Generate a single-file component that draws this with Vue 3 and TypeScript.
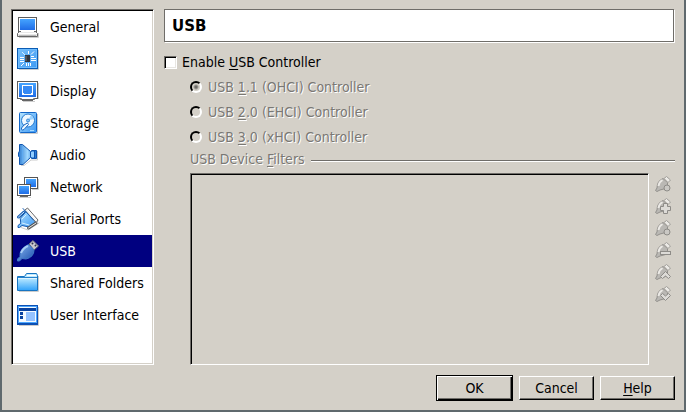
<script setup lang="ts">
import { ref } from 'vue'

type Category = { id: string; label: string }
type Controller = { id: string; digit: string; rest: string }
type Action = { id: string; label: string }

const categories: Category[] = [
  { id: 'general', label: 'General' },
  { id: 'system', label: 'System' },
  { id: 'display', label: 'Display' },
  { id: 'storage', label: 'Storage' },
  { id: 'audio', label: 'Audio' },
  { id: 'network', label: 'Network' },
  { id: 'serial', label: 'Serial Ports' },
  { id: 'usb', label: 'USB' },
  { id: 'folders', label: 'Shared Folders' },
  { id: 'ui', label: 'User Interface' },
]

const controllers: Controller[] = [
  { id: 'ohci', digit: '1', rest: '.1 (OHCI) Controller' },
  { id: 'ehci', digit: '2', rest: '.0 (EHCI) Controller' },
  { id: 'xhci', digit: '3', rest: '.0 (xHCI) Controller' },
]

const actions: Action[] = [
  { id: 'new', label: 'Add empty filter' },
  { id: 'add', label: 'Add filter from device' },
  { id: 'edit', label: 'Edit filter' },
  { id: 'remove', label: 'Remove filter' },
  { id: 'up', label: 'Move filter up' },
  { id: 'down', label: 'Move filter down' },
]

const current = ref('usb')
const enabled = ref(false)
const controller = ref('ohci')
</script>

<template>
  <form class="window" @submit.prevent>
    <svg class="defs" aria-hidden="true">
      <defs>
        <linearGradient id="blue" x1="0" y1="0" x2="0" y2="1">
          <stop offset="0" stop-color="#45a4ff" />
          <stop offset="1" stop-color="#1f6ce6" />
        </linearGradient>
        <linearGradient id="sky" x1="0" y1="0" x2="1" y2="1">
          <stop offset="0" stop-color="#b4e4ff" />
          <stop offset="1" stop-color="#3a96f4" />
        </linearGradient>
        <linearGradient id="folder" x1="0" y1="0" x2="0" y2="1">
          <stop offset="0" stop-color="#bdeaff" />
          <stop offset="1" stop-color="#36a5fa" />
        </linearGradient>
        <linearGradient id="cone" x1="0" y1="0" x2="1" y2="0">
          <stop offset="0" stop-color="#2b7ad0" />
          <stop offset="0.5" stop-color="#a0d8ff" />
          <stop offset="1" stop-color="#1c6fd4" />
        </linearGradient>
        <linearGradient id="plug" x1="0" y1="0" x2="1" y2="1">
          <stop offset="0" stop-color="#86b6ee" />
          <stop offset="1" stop-color="#1c4fae" />
        </linearGradient>
      </defs>
    </svg>

    <nav class="categories" aria-label="Settings categories">
      <button
        v-for="c in categories"
        :key="c.id"
        type="button"
        class="category"
        :class="{ selected: current === c.id }"
        @click="current = c.id"
      >
        <svg class="icon" viewBox="0 0 24 24" aria-hidden="true">
          <g v-if="c.id === 'general'">
            <path d="M3 22.500H22.500V18" fill="none" stroke="#ccc" />
            <rect x="2.500" y="2.500" width="18" height="14" fill="#fff" stroke="#5c5c5c" />
            <rect x="4" y="4" width="15" height="11" fill="url(#blue)" />
            <path d="M3.500 16.500H19.500L21.500 18.500V21.500H1.500V18.500Z" fill="#e8e8e8" stroke="#666" />
            <path d="M5 16.500H18M2 18.500H21" stroke="#fff" />
            <path d="M3 20.500H20" stroke="#bbb" />
          </g>
          <g v-else-if="c.id === 'system'">
            <path d="M3 22.500H22.500V3" fill="none" stroke="#ccc" />
            <rect x="1.500" y="1.500" width="20" height="20" fill="url(#sky)" stroke="#0b5cb4" />
            <rect x="2.500" y="2.500" width="18" height="18" fill="#3f9cf2" fill-opacity="0.500" stroke="#6dbcff" />
            <rect x="9" y="8" width="5" height="7" fill="#303640" />
            <path d="M10 9V14" stroke="#777" />
            <path d="M4 10.500H8M4 12.500H8M4 14.500H8M15 9.500H18M15 11.500H20M15 13.500H20M10.500 16V19M12.500 16V19M14.500 16V19M12.500 4V7M15 7.500L18 4.500M5 19L8 16" fill="none" stroke="#fff" />
            <path d="M6 5L9 8" stroke="#d8f0ff" />
          </g>
          <g v-else-if="c.id === 'display'">
            <path d="M22.500 4V20M7 22.500H19" stroke="#ccc" />
            <rect x="1.500" y="2.500" width="20" height="17" fill="#fff" stroke="#5c5c5c" />
            <rect x="3" y="4" width="17" height="14" fill="url(#blue)" />
            <rect x="6.500" y="6.500" width="10" height="9" fill="#3589f4" stroke="#fff" />
            <path d="M7 14.500H8M15 14.500H16" stroke="#fff" />
            <path d="M4.500 19.500V20.500H18.500V19.500M6 21.500H17" fill="#ddd" stroke="#666" />
            <path d="M6 19.500H17" stroke="#fff" />
          </g>
          <g v-else-if="c.id === 'storage'">
            <path d="M4 22.500H21.500V3" fill="none" stroke="#ccc" />
            <rect x="3.500" y="1.500" width="17" height="20" rx="1" fill="url(#sky)" stroke="#1266c8" />
            <circle cx="12" cy="9.500" r="6.500" fill="#eef8ff" stroke="#267bd0" />
            <path d="M12 9.500L15 4A6 6 0 0 1 18 8Z" fill="#9bd2ff" />
            <circle cx="12" cy="9.500" r="1.500" fill="#8cc5f4" stroke="#3a8bd8" />
            <path d="M12.500 13.500L8 18.500Q5 20 5.500 17L8 14L11.500 12Z" fill="#eef8ff" stroke="#1767c2" />
            <path d="M14 19.500H18" stroke="#a8dcff" />
          </g>
          <g v-else-if="c.id === 'audio'">
            <path d="M5 22.500H8L15 17H21.500V8" fill="none" stroke="#ccc" />
            <path d="M3.500 1.500H6.500L14.500 8.500H15.500V7.500H20.500V15.500H15.500V14.500H14.500L7 21.500H3.500V14.500L2.500 13V10L3.500 8Z" fill="url(#cone)" stroke="#1055ae" />
            <path d="M14.500 9V14M18.500 8V15" stroke="#1055ae" />
            <rect x="15" y="9" width="3" height="5" fill="#92ceff" />
            <path d="M6.500 4V19" stroke="#5faaf0" />
          </g>
          <g v-else-if="c.id === 'network'">
            <path d="M22.500 4V14.500H16M3 22.500H15" fill="none" stroke="#ccc" />
            <rect x="8.500" y="2.500" width="13" height="11" fill="#fff" stroke="#555" />
            <rect x="10" y="4" width="10" height="8" fill="url(#blue)" />
            <rect x="1.500" y="9.500" width="13" height="11" fill="#fff" stroke="#555" />
            <rect x="3" y="11" width="10" height="8" fill="url(#blue)" />
            <path d="M4 21.500H12" stroke="#666" />
          </g>
          <g v-else-if="c.id === 'serial'" stroke-linejoin="round" stroke-linecap="round">
            <path d="M5 20.500L12 23L23 16" fill="none" stroke="#ccc" />
            <path d="M4.500 11L10 4.500L20 15L13 20L6 18.500L3.500 20.500H2V18.500L4.500 16.500Z" fill="url(#sky)" stroke="#145ab0" />
            <path d="M6 12L10 8M6 16L13 18" stroke="#d5efff" />
            <path d="M9 3L11.500 1L22 13L20.500 15.500Z" fill="#f3f3f3" stroke="#686868" />
            <path d="M12 3L20 12.500" stroke="#fff" />
            <path d="M7 1.500L17 12.500" stroke="#1a62b8" />
            <path d="M2.500 10L8 5" stroke="#145ab0" stroke-width="3" />
            <path d="M2.500 10L8 5" stroke="#d5edff" />
            <path d="M12.500 21L20 16" stroke="#555" stroke-width="3" />
            <path d="M12.500 21L20 16" stroke="#eee" />
          </g>
          <g v-else-if="c.id === 'usb'">
            <path d="M13 5L17 1.500L22.500 7L18 11Z" fill="#c8c8d0" stroke="#686878" />
            <path d="M16 4L17 5M19 6L20 7" stroke="#33334c" stroke-width="2" />
            <path d="M12.500 5.500L18 11Q18 18 10 20L6 19.500L3.500 22H1.500V20L4 17.500Q3 10 12.500 5.500Z" fill="url(#plug)" stroke="#3f7bc6" />
            <path d="M5 14Q7 9 12 7" fill="none" stroke="#a9cdf5" stroke-width="2" />
          </g>
          <g v-else-if="c.id === 'folders'">
            <path d="M3 20.500H22.500V5" fill="none" stroke="#ccc" />
            <path d="M1.500 5.500H8.500L10.500 2.500H20.500L21.500 4.500V19.500H1.500Z" fill="#bdeaff" stroke="#1775c2" />
            <path d="M11 4.500H20" stroke="#fff" />
            <path d="M2 7H21V19H2Z" fill="url(#folder)" />
            <path d="M2 6.500H21" stroke="#2681cc" />
            <path d="M2 7.500H21" stroke="#dff5ff" />
          </g>
          <g v-else>
            <path d="M3 22.500H22.500V4" fill="none" stroke="#ccc" />
            <rect x="1.500" y="2.500" width="20" height="18" fill="#f4faff" stroke="#0c50b4" />
            <path d="M1 21H22" stroke="#0c50b4" stroke-width="2" />
            <rect x="2.500" y="3.500" width="18" height="16" fill="none" stroke="#4ba6ff" />
            <rect x="3" y="5" width="17" height="3" fill="#0842a0" />
            <rect x="4" y="9" width="3" height="3" fill="#0842a0" />
            <rect x="4" y="13" width="3" height="3" fill="#0842a0" />
            <rect x="10" y="9" width="9" height="9" fill="#94c2ff" />
          </g>
        </svg>
        <span>{{ c.label }}</span>
      </button>
    </nav>

    <main class="page">
      <h1 class="title">USB</h1>

      <label class="option" for="enable-usb">
        <input id="enable-usb" v-model="enabled" class="check" type="checkbox" />
        <span>Enable <u>U</u>SB Controller</span>
      </label>

      <div class="details" :class="{ disabled: !enabled }">
        <div class="radios" role="radiogroup" aria-label="USB Controller">
          <label v-for="r in controllers" :key="r.id" class="option" :for="r.id">
            <input
              :id="r.id"
              v-model="controller"
              class="radio"
              type="radio"
              name="controller"
              :value="r.id"
              :disabled="!enabled"
            />
            <span>USB <u>{{ r.digit }}</u>{{ r.rest }}</span>
          </label>
        </div>

        <h2 id="filters-label" class="separator"><span>USB Device <u>F</u>ilters</span></h2>

        <div class="filters">
          <div class="filter-list" role="listbox" aria-labelledby="filters-label"></div>
          <div class="toolbar">
            <button
              v-for="a in actions"
              :key="a.id"
              type="button"
              class="tool"
              :aria-label="a.label"
              :disabled="!enabled"
            >
              <svg viewBox="0 0 16 16" aria-hidden="true">
                <path d="M8 2.500L12.500 6.500V12L5 14L2 15.500L.5 14.500L2 12Q2 5 8 2.500Z" fill="#bab8b4" stroke="#92908c" />
                <path d="M3.500 10Q4 6 7.500 4" fill="none" stroke="#eceae6" stroke-width="2" />
                <path d="M9 2.500L11.500 .5L15.500 4L13 6.500Z" fill="#eceae6" stroke="#a09e9a" />
                <circle v-if="a.id === 'new' || a.id === 'edit'" cx="12" cy="12" r="3" fill="#cac8c4" stroke="#8e8c88" />
                <path v-else-if="a.id === 'add'" d="M8.500 5.500H12.500V8.500H15.500V12.500H12.500V15.500H8.500V12.500H5.500V8.500H8.500Z" fill="#dddbd7" stroke="#8e8c88" />
                <rect v-else-if="a.id === 'remove'" x="5.500" y="9.500" width="10" height="3" fill="#dddbd7" stroke="#8e8c88" />
                <path v-else-if="a.id === 'up'" d="M10.500 7.500L15.500 12.500L13.500 14.500L10.500 12L7.500 14.500L5.500 12.500Z" fill="#dddbd7" stroke="#8e8c88" />
                <path v-else d="M5.500 9.500L7.500 7.500L10.500 10L13.500 7.500L15.500 9.500L10.500 14.500Z" fill="#dddbd7" stroke="#8e8c88" />
              </svg>
            </button>
          </div>
        </div>
      </div>
    </main>

    <footer class="buttons">
      <button type="submit" class="push default">OK</button>
      <button type="button" class="push">Cancel</button>
      <button type="button" class="push"><u>H</u>elp</button>
    </footer>
  </form>
</template>

<style>
body {
  margin: 0;
  background: #d4d0c8;
}
</style>

<style scoped>
.window {
  box-sizing: border-box;
  min-height: 100vh;
  display: grid;
  grid-template-columns: 143px 1fr;
  grid-template-rows: 1fr 26px;
  column-gap: 10px;
  row-gap: 10px;
  padding: 9px;
  border: 2px solid #5f696d;
  border-top: 0;
  background: #d4d0c8;
  color: #000;
  font: 14px/19px "DejaVu Sans Condensed", "DejaVu Sans", sans-serif;
}

.defs {
  position: absolute;
  width: 0;
  height: 0;
}

button {
  font: inherit;
  color: inherit;
}

u {
  text-decoration: underline;
  text-decoration-thickness: 1px;
  text-underline-offset: 2px;
  text-decoration-skip-ink: none;
}

.categories,
.filter-list {
  border: 1px solid;
  border-color: #6f6d69 #fff #fff #6f6d69;
}

.categories {
  display: flex;
  flex-direction: column;
  padding: 1px;
  background: #fff;
  box-shadow: inset 1px 1px #000, inset -1px -1px #d4d0c8;
}

.category {
  display: flex;
  align-items: center;
  gap: 10px;
  height: 32px;
  padding: 0 3px;
  border: 0;
  background: none;
  white-space: nowrap;
}

.category span,
.option span {
  line-height: 21px;
}

.category.selected {
  background: #000080;
  color: #fff;
}

.icon {
  flex: none;
  width: 24px;
  height: 24px;
}

.page {
  display: flex;
  flex-direction: column;
  min-width: 0;
}

.title {
  margin: 0 1px 10px 0;
  padding: 7px 7px 5px;
  border: 1px solid #6f6d69;
  background: #fff;
  box-shadow: 1px 1px #fff;
  font-family: "DejaVu Sans", sans-serif;
  font-size: 15px;
  line-height: 19px;
}

.option {
  display: flex;
  align-items: center;
  gap: 5px;
}

.check,
.radio {
  appearance: none;
  flex: none;
  margin: 0;
  width: 13px;
  height: 13px;
}

.check {
  border: 1px solid;
  border-color: #6f6d69 #fff #fff #6f6d69;
  background: #fff;
  box-shadow: inset 1px 1px #000, inset -1px -1px #e8e6e2;
}

.check:checked {
  background: linear-gradient(#000, #000) center / 5px 5px no-repeat #fff;
}

.radio {
  width: 12px;
  height: 12px;
  margin-bottom: 1px;
  border: 2px solid;
  border-color: #000 #fff #fff #000;
  border-radius: 50%;
  background: #fff;
}

.radio:disabled {
  background: #d4d0c8;
}

.radio:checked {
  background-image: radial-gradient(circle, #000 2px, transparent 3px);
}

.radio:checked:disabled {
  background-image: radial-gradient(circle, #6f6d69 1px, transparent 3px);
}

.details {
  flex: 1;
  display: flex;
  flex-direction: column;
  padding: 4px 0 0 26px;
}

.disabled {
  color: #7a7874;
  text-shadow: 1px 1px #fff;
}

.radios {
  display: flex;
  flex-direction: column;
  gap: 4px;
}

.radios .option {
  gap: 6px;
}

.separator {
  display: flex;
  align-items: center;
  gap: 6px;
  margin: 2px 0 4px;
  font: inherit;
}

.separator::after {
  content: "";
  flex: 1;
  height: 1px;
  margin-top: 2px;
  border-top: 1px solid #6f6d69;
  background: #fff;
}

.filters {
  flex: 1;
  display: grid;
  grid-template-columns: 1fr 22px;
  gap: 4px;
}

.filter-list {
  box-shadow: inset 1px 1px #000;
}

.toolbar {
  display: flex;
  flex-direction: column;
}

.tool {
  display: flex;
  align-items: center;
  height: 22px;
  padding: 0 2px;
  border: 0;
  background: none;
}

.tool svg {
  width: 16px;
  height: 16px;
}

.buttons {
  grid-column: 1 / -1;
  display: flex;
  justify-content: flex-end;
  align-items: center;
  gap: 6px;
}

.push {
  box-sizing: border-box;
  width: 75px;
  height: 24px;
  padding: 0;
  border: 1px solid;
  border-color: #fff #000 #000 #fff;
  background: #d4d0c8;
  box-shadow: inset -1px -1px #6f6d69;
}

.push.default {
  width: 77px;
  height: 26px;
  border: 1px solid #000;
  box-shadow: inset 1px 1px #fff, inset -1px -1px #000, inset -2px -2px #6f6d69;
}
</style>
